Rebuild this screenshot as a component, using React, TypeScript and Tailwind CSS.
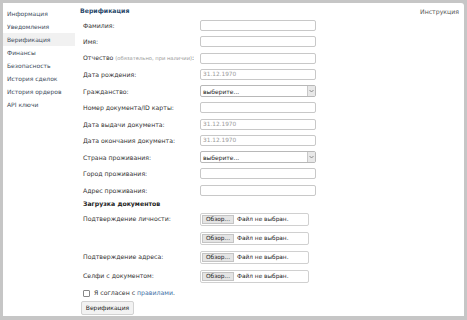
import React from "react";

const menu = ["Информация", "Уведомления", "Верификация", "Финансы", "Безопасность", "История сделок", "История ордеров", "API ключи"];

function TextInput({ placeholder }: { placeholder?: string }) {
  return (
    <div className="w-[116px] h-[11px] border border-[#c8c8c8] rounded-[2px] bg-white flex items-center pl-[2px] text-[5.8px] text-[#9a9a9a]">
      {placeholder}
    </div>
  );
}

function Select() {
  return (
    <div className="w-[116px] h-[12px] border border-[#b8b8b8] rounded-[2px] bg-white flex items-center justify-between text-[6px] text-[#222]">
      <span className="pl-[2px]">выберите...</span>
      <span className="w-[8px] h-full border-l border-[#c8c8c8] bg-[#e8e8e8] flex items-center justify-center">
        <svg width="5" height="4" viewBox="0 0 5 4"><path d="M0.5 1 L2.5 3 L4.5 1" stroke="#777" strokeWidth="0.8" fill="none" /></svg>
      </span>
    </div>
  );
}

function FileInput() {
  return (
    <div className="w-[109px] h-[13px] border border-[#d0d0d0] rounded-[2px] bg-white flex items-center p-[1px] text-[5.8px] text-[#222]">
      <span className="h-full w-[32px] bg-[#e4e4e4] border border-[#c4c4c4] flex items-center justify-center">Обзор...</span>
      <span className="pl-[3px]">Файл не выбран.</span>
    </div>
  );
}

const rows: { label: React.ReactNode; field: React.ReactNode }[] = [
  { label: "Фамилия:", field: <TextInput /> },
  { label: "Имя:", field: <TextInput /> },
  { label: <>Отчество <span className="text-[#999] text-[5.2px]">(обязательно, при наличии)</span>:</>, field: <TextInput /> },
  { label: "Дата рождения:", field: <TextInput placeholder="31.12.1970" /> },
  { label: "Гражданство:", field: <Select /> },
  { label: "Номер документа/ID карты:", field: <TextInput /> },
  { label: "Дата выдачи документа:", field: <TextInput placeholder="31.12.1970" /> },
  { label: "Дата окончания документа:", field: <TextInput placeholder="31.12.1970" /> },
  { label: "Страна проживания:", field: <Select /> },
  { label: "Город проживания:", field: <TextInput /> },
  { label: "Адрес проживания:", field: <TextInput /> },
];

const files = ["Подтверждение личности:", "", "Подтверждение адреса:", "Селфи с документом:"];

export default function App() {
  return (
    <div
      className="w-[467px] h-[320px] bg-[#c6c6c6] pt-[3px] pl-[3px] pr-[3px] pb-[4px]"
      style={{ fontFamily: '"DejaVu Sans", Verdana, sans-serif' }}
    >
      <div className="w-full h-full bg-white rounded-tr-[3px] flex">
        <div className="w-[72px] pt-[4px] flex flex-col">
          {menu.map((m) => (
            <div
              key={m}
              className={`h-[13px] flex items-center pl-[4px] text-[6px] text-[#3e4c5c] ${m === "Верификация" ? "bg-[#f1f1f1]" : ""}`}
            >
              {m}
            </div>
          ))}
        </div>
        <div className="flex-1 pl-[5px] pr-[5px] flex flex-col">
          <div className="h-[14px] flex items-center justify-between pt-[1px]">
            <span className="text-[6.2px] font-bold text-[#2b4a6c]">Верификация</span>
            <span className="text-[6.2px] text-[#555] mt-[3px]">Инструкция</span>
          </div>
          <div className="flex flex-col pl-[3px]">
            {rows.map((r, i) => (
              <div key={i} className="h-[16.5px] flex items-center">
                <div className="w-[117px] text-[6.2px] text-[#333] whitespace-nowrap">{r.label}</div>
                {r.field}
              </div>
            ))}
            <div className="h-[11px] flex items-center text-[6.2px] font-bold text-[#222]">Загрузка документов</div>
            <div className="flex flex-col">
              {files.map((f, i) => (
                <div key={i} className="h-[19px] flex items-center">
                  <div className="w-[117px] text-[6.2px] text-[#333] whitespace-nowrap">{f}</div>
                  <FileInput />
                </div>
              ))}
            </div>
            <div className="h-[15px] flex items-center gap-[4px] text-[6.2px] text-[#333]">
              <span className="w-[7px] h-[7px] border border-[#888] rounded-[1px] bg-white"></span>
              <span>
                Я согласен с <span className="text-[#3b6ea5]">правилами</span>.
              </span>
            </div>
            <div className="flex">
              <div className="-ml-[2px] h-[14px] w-[53px] flex items-center justify-center border border-[#d2d2d2] rounded-[2px] bg-[#f2f2f2] text-[6px] text-[#222] font-medium">
                Верификация
              </div>
            </div>
          </div>
        </div>
      </div>
    </div>
  );
}
